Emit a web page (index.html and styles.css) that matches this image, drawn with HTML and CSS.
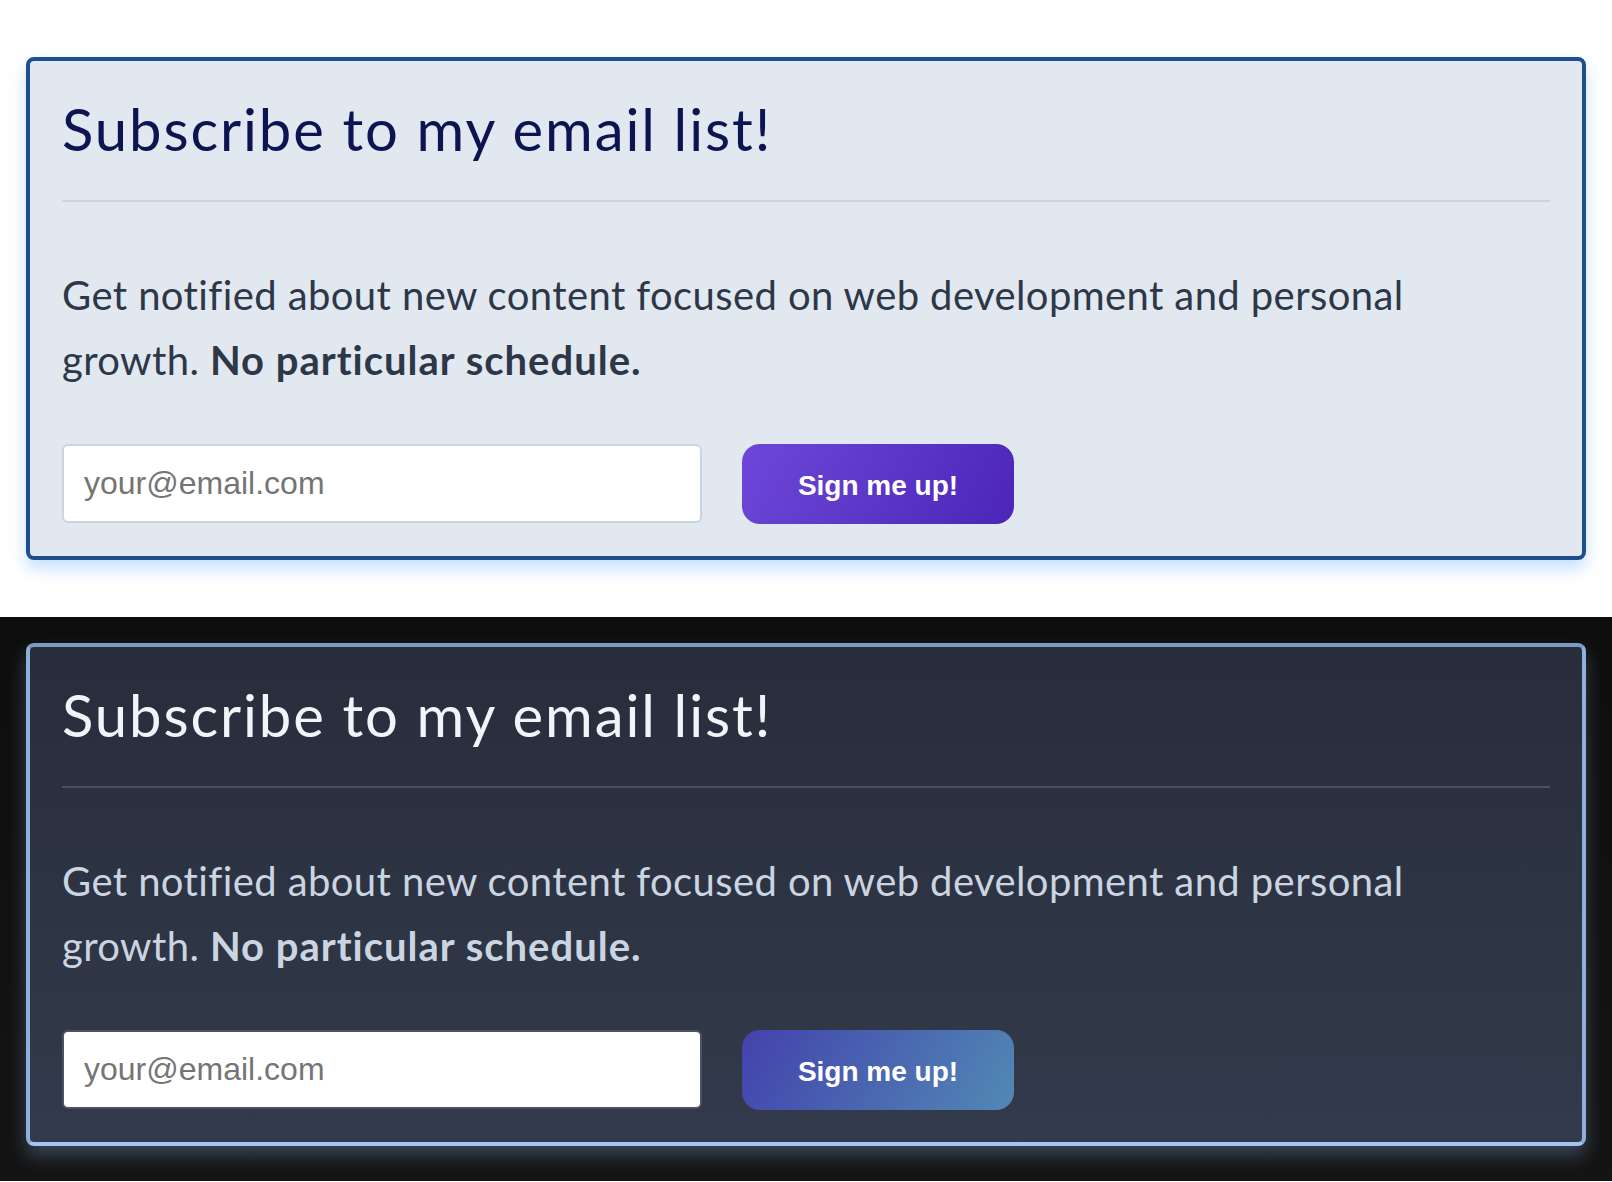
FILE: index.html
```html
<!DOCTYPE html>
<html lang="en">
<head>
<meta charset="utf-8">
<title>Subscribe</title>
<link rel="stylesheet" href="styles.css">
</head>
<body>
<section class="theme theme-light">
  <div class="card">
    <h2 class="card-title">Subscribe to my email list!</h2>
    <p class="card-text">Get notified about new content focused on web development and personal growth. <strong>No particular schedule.</strong></p>
    <form class="signup">
      <input class="signup-input" type="email" placeholder="your@email.com">
      <button class="signup-button" type="button">Sign me up!</button>
    </form>
  </div>
</section>
<section class="theme theme-dark">
  <div class="card">
    <h2 class="card-title">Subscribe to my email list!</h2>
    <p class="card-text">Get notified about new content focused on web development and personal growth. <strong>No particular schedule.</strong></p>
    <form class="signup">
      <input class="signup-input" type="email" placeholder="your@email.com">
      <button class="signup-button" type="button">Sign me up!</button>
    </form>
  </div>
</section>
</body>
</html>
```
FILE: styles.css
```css
html, body {
  margin: 0;
  padding: 0;
  overflow: hidden;
}

body {
  font-family: Lato, "Noto Sans", sans-serif;
}

.theme {
  padding: 57px 26px;
}

.theme-light {
  background: #ffffff;
}

.theme-dark {
  padding: 26px 26px 35px;
  background: linear-gradient(to bottom, #0e0e0e, #141414);
}

.card {
  border: 4px solid #1f4e8f;
  border-radius: 8px;
  padding: 32px;
  background: #e2e8f0;
  box-shadow: 0 9px 16px rgba(96, 165, 250, 0.35);
}

.card-title {
  margin: 0;
  padding-top: 3px;
  padding-bottom: 38px;
  border-bottom: 2px solid #cbd5e1;
  font-size: 58px;
  font-weight: 400;
  line-height: 66px;
  letter-spacing: 1.9px;
  color: #0c1452;
}

.card-text {
  margin: 61px 0 51px;
  max-width: 1440px;
  font-size: 40px;
  line-height: 65px;
  letter-spacing: 0.4px;
  color: #2d3748;
}

.card-text strong {
  font-weight: 700;
  letter-spacing: 1px;
}

.signup {
  display: flex;
  gap: 40px;
  margin: 0;
}

.signup-input {
  box-sizing: border-box;
  width: 640px;
  height: 79px;
  margin: 0;
  padding: 0 20px;
  border: 2px solid #cbd5e1;
  border-radius: 6px;
  background: #ffffff;
  font-family: "Liberation Sans", Arial, sans-serif;
  font-size: 32px;
  color: #1f2937;
}

.signup-input::placeholder {
  color: #757575;
}

.signup-button {
  box-sizing: border-box;
  width: 272px;
  height: 80px;
  margin: 0;
  padding: 4px 0 0;
  border: none;
  border-radius: 18px;
  background: linear-gradient(120deg, #6d48d8, #4a25b8);
  font-family: "Liberation Sans", Arial, sans-serif;
  font-size: 28px;
  font-weight: 700;
  color: #ffffff;
}

.theme-dark .card {
  border-color: #7d9abf #8fb0d8 #a3c6f0;
  background: linear-gradient(to bottom, #272d3b, #333a4b);
  box-shadow: 0 10px 18px rgba(147, 197, 253, 0.28);
}

.theme-dark .card-title {
  color: #f1f5f9;
  border-bottom-color: #4a5163;
}

.theme-dark .card-text {
  color: #cbd5e1;
}

.theme-dark .signup-input {
  border-color: #4b5263;
}

.theme-dark .signup-button {
  background: linear-gradient(120deg, #4342ad, #5189b4);
}
```
